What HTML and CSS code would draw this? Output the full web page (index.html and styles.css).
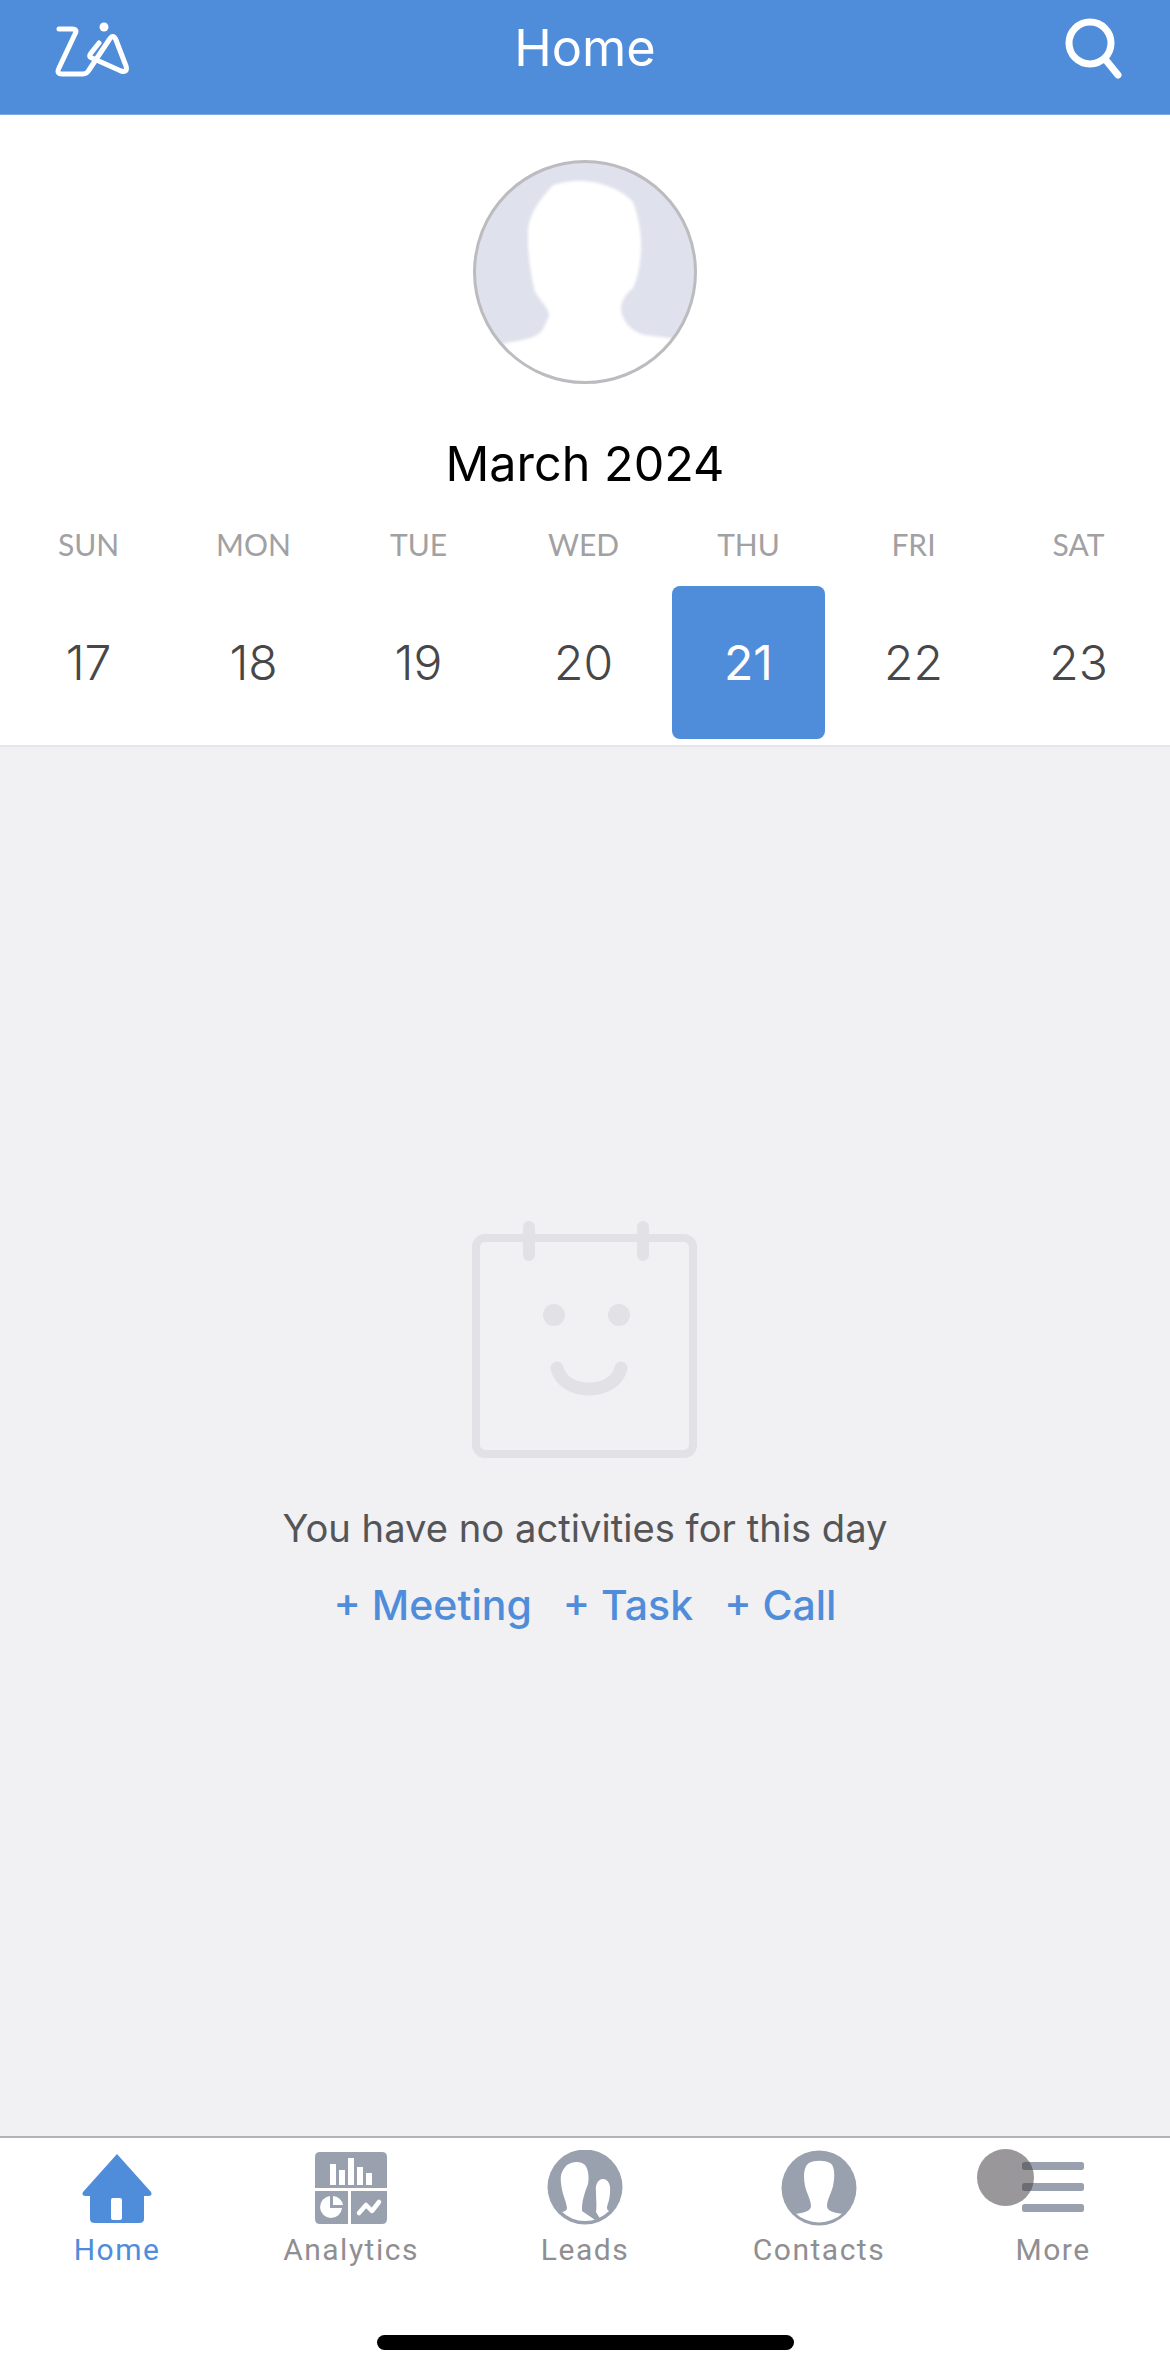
FILE: index.html
```html
<!DOCTYPE html>
<html lang="en">
<head>
    <meta charset="UTF-8">
    <meta name="viewport" content="width=device-width, initial-scale=1.0">
    <title>Home</title>
    <link rel="stylesheet" href="styles.css">
</head>
<body>
    <header class="topbar">
        <svg class="zia-logo" viewBox="0 0 76 56" fill="none" stroke="#fff" stroke-width="5" stroke-linecap="round" stroke-linejoin="round">
            <path d="M4 7H17Q23 7 20 12L4 46Q1 52 7 52H28Q32 52 34 48L54 18Q58 11 61 18L71 44Q73 51 66 49L37 36Q33 35 36 31L44 21"/>
            <circle cx="49" cy="5" r="4.500" fill="#fff" stroke="none"/>
        </svg>
        <h1 class="topbar-title">Home</h1>
        <svg class="search-icon" viewBox="0 0 62 70" fill="none" stroke="#fff" stroke-width="7" stroke-linecap="round">
            <circle cx="26" cy="26" r="21"/>
            <path d="M41 42L54 58"/>
        </svg>
    </header>

    <section class="summary">
        <svg class="avatar" viewBox="0 0 224 224">
            <clipPath id="avatar-clip"><circle cx="112" cy="112" r="110"/></clipPath>
            <circle cx="112" cy="112" r="110" fill="#dfe1ec"/>
            <g clip-path="url(#avatar-clip)">
                <path class="avatar-head" fill="#fff" d="M0 190L33 183C52 180 66 177 70 169L76 156C76 148 68 142 62 132C57 112 54 90 55 69C57 52 68 38 80 25C92 22 100 20 112 21C128 22 150 30 160 42C166 58 169 76 168 92C167 108 164 120 160 128C150 136 146 146 149 154C152 164 160 172 172 175L197 178L224 190V224H0Z"/>
            </g>
            <circle cx="112" cy="112" r="110.500" fill="none" stroke="#bcbcc0" stroke-width="3"/>
        </svg>
        <h2 class="month">March 2024</h2>
        <div class="week">
            <div class="day"><span class="day-name">SUN</span><span class="day-num">17</span></div>
            <div class="day"><span class="day-name">MON</span><span class="day-num">18</span></div>
            <div class="day"><span class="day-name">TUE</span><span class="day-num">19</span></div>
            <div class="day"><span class="day-name">WED</span><span class="day-num">20</span></div>
            <div class="day day-selected"><span class="day-name">THU</span><span class="day-num">21</span></div>
            <div class="day"><span class="day-name">FRI</span><span class="day-num">22</span></div>
            <div class="day"><span class="day-name">SAT</span><span class="day-num">23</span></div>
        </div>
    </section>

    <main class="agenda">
        <svg class="empty-icon" viewBox="0 0 226 238" fill="none" stroke="#e2e1e5" stroke-width="8" stroke-linecap="round">
            <rect x="4" y="18" width="217" height="216" rx="9"/>
            <path d="M57 7V35M171 7V35" stroke-width="12"/>
            <circle cx="82" cy="95" r="11" fill="#e2e1e5" stroke="none"/>
            <circle cx="147" cy="95" r="11" fill="#e2e1e5" stroke="none"/>
            <path d="M85 148C91 176 143 176 149 148" stroke-width="13"/>
        </svg>
        <p class="empty-text">You have no activities for this day</p>
        <div class="quick-links">
            <a class="quick-link">+ Meeting</a>
            <a class="quick-link">+ Task</a>
            <a class="quick-link">+ Call</a>
        </div>
    </main>

    <nav class="tabbar">
        <div class="tabs">
            <div class="tab tab-active">
                <svg class="tab-icon" viewBox="0 0 76 76">
                    <path fill="#4f8ddb" d="M38 4L72 42Q74 46 69 46H65V69Q65 73 60 73H16Q11 73 11 69V46H7Q2 46 4 42Z"/>
                    <rect x="32" y="48" width="11" height="22" rx="2" fill="#fff"/>
                </svg>
                <span class="tab-label">Home</span>
            </div>
            <div class="tab">
                <svg class="tab-icon" viewBox="0 0 76 76">
                    <path fill="#9aa1ae" d="M7 2H69Q74 2 74 7V38H2V7Q2 2 7 2ZM2 41H35V74H7Q2 74 2 69ZM38 41H74V69Q74 74 69 74H38Z"/>
                    <g fill="#fff">
                        <rect x="17" y="14" width="6" height="21"/>
                        <rect x="26" y="20" width="6" height="15"/>
                        <rect x="35" y="8" width="6" height="27"/>
                        <rect x="44" y="17" width="6" height="18"/>
                        <rect x="53" y="23" width="6" height="12"/>
                        <path d="M17 46V58H29A11 11 0 1 1 17 46ZM20 46A11 11 0 0 1 30 55H20Z"/>
                    </g>
                    <path d="M46 63L53 55L59 61L66 52" fill="none" stroke="#fff" stroke-width="4.500" stroke-linecap="round" stroke-linejoin="round"/>
                </svg>
                <span class="tab-label">Analytics</span>
            </div>
            <div class="tab">
                <svg class="tab-icon" viewBox="0 0 76 76">
                    <clipPath id="leads-clip"><circle cx="38" cy="37" r="34"/></clipPath>
                    <circle cx="38" cy="37" r="37.500" fill="#9aa1ae"/>
                    <g clip-path="url(#leads-clip)" fill="#fff">
                        <path d="M6 65L15 62Q20 61 20 58C19 50 15 44 14 33C13 25 15 20 20 15C26 11 34 11 38 15C42 20 42 29 41 34C38 42 35 50 35 59V61L54 74L40 80H6Z"/>
                        <path d="M49 62C50 55 49 50 49 42C48 33 52 29 56 29C60 29 64 33 63 42C63 50 60 55 60 58C60 61 64 62 68 62L72 60V80H60Z"/>
                    </g>
                </svg>
                <span class="tab-label">Leads</span>
            </div>
            <div class="tab">
                <svg class="tab-icon" viewBox="0 0 76 76">
                    <clipPath id="contact-clip"><circle cx="38" cy="38" r="34.500"/></clipPath>
                    <circle cx="38" cy="38" r="37.500" fill="#9aa1ae"/>
                    <path clip-path="url(#contact-clip)" fill="#fff" d="M4 60L14 64C23 63 30 61 30 56C30 50 26 44 24 36C22 26 23 16 28 13C33 10 44 10 49 13C54 16 54 26 52 36C50 44 46 50 46 56C46 61 53 63 62 64L72 60V80H4Z"/>
                </svg>
                <span class="tab-label">Contacts</span>
            </div>
            <div class="tab">
                <svg class="tab-icon" viewBox="0 0 76 76">
                    <g fill="#9aa1ae">
                        <rect x="7" y="12" width="62" height="8" rx="2.500"/>
                        <rect x="7" y="33" width="62" height="8" rx="2.500"/>
                        <rect x="7" y="54" width="62" height="8" rx="2.500"/>
                    </g>
                </svg>
                <span class="tab-label">More</span>
            </div>
        </div>
        <div class="home-indicator"></div>
        <div class="touch-dot"></div>
    </nav>
</body>
</html>
```

FILE: styles.css
```css
* {
    box-sizing: border-box;
}

body {
    font-family: Inter, "Liberation Sans", sans-serif;
    margin: 0;
    padding: 0;
    display: flex;
    flex-direction: column;
    height: 100vh;
    background-color: #f1f0f3;
    overflow: hidden;
}

h1, h2, p {
    margin: 0;
    font-weight: 400;
}

.topbar {
    height: 115px;
    flex: none;
    background-color: #4f8ddb;
    border-bottom: 1px solid #7ba7e2;
    display: grid;
    grid-template-columns: 1fr auto 1fr;
    align-items: start;
}

.zia-logo {
    width: 76px;
    height: 56px;
    margin: 22px 0 0 55px;
}

.topbar-title {
    color: #fff;
    font-size: 50.500px;
    line-height: 56px;
    margin-top: 20px;
}

.search-icon {
    width: 62px;
    height: 70px;
    margin: 17px 44px 0 0;
    justify-self: end;
}

.summary {
    flex: none;
    height: 632px;
    background-color: #fff;
    border-bottom: 2px solid #e6e5e9;
    display: flex;
    flex-direction: column;
    align-items: center;
    padding-top: 45px;
}

.avatar {
    width: 224px;
    height: 224px;
    display: block;
}

.avatar-head {
    filter: blur(1.5px);
}

.month {
    font-size: 48.500px;
    line-height: 58px;
    color: #000;
    margin-top: 51px;
}

.week {
    width: 100%;
    display: grid;
    grid-template-columns: repeat(7, 165px);
    padding: 0 5px 0 6px;
    margin-top: 31px;
}

.day {
    display: flex;
    flex-direction: column;
    align-items: center;
}

.day-name {
    font-family: Lato, sans-serif;
    font-size: 30px;
    line-height: 40px;
    color: #a1a1a3;
}

.day-num {
    width: 153px;
    height: 153px;
    margin-top: 22px;
    display: flex;
    align-items: center;
    justify-content: center;
    font-family: Inter, sans-serif;
    font-weight: 300;
    font-size: 48px;
    color: #47474a;
    border-radius: 8px;
}

.day-selected .day-num {
    background-color: #4f8ddb;
    color: #fff;
    font-weight: 400;
}

.agenda {
    flex: 1;
    display: flex;
    flex-direction: column;
    align-items: center;
    padding-top: 473px;
    min-height: 0;
}

.empty-icon {
    width: 226px;
    height: 238px;
    display: block;
}

.empty-text {
    font-size: 38.200px;
    line-height: 46px;
    color: #555558;
    margin-top: 47px;
}

.quick-links {
    display: flex;
    gap: 31px;
    margin-top: 29px;
}

.quick-link {
    font-size: 41px;
    line-height: 50px;
    font-weight: 500;
    color: #4f8ddb;
}

.tabbar {
    flex: none;
    height: 238px;
    background-color: #fff;
    border-top: 2px solid #b2b1b5;
    position: relative;
}

.tabs {
    display: grid;
    grid-template-columns: repeat(5, 234px);
    padding-top: 12px;
}

.tab {
    display: flex;
    flex-direction: column;
    align-items: center;
}

.tab-icon {
    width: 76px;
    height: 76px;
    display: block;
}

.tab-label {
    font-family: Roboto, sans-serif;
    font-size: 30px;
    line-height: 36px;
    letter-spacing: 1.500px;
    color: #8f8f93;
    margin-top: 6px;
}

.tab-active .tab-label {
    color: #4f8ddb;
}

.home-indicator {
    position: absolute;
    left: 377px;
    top: 197px;
    width: 417px;
    height: 15px;
    border-radius: 8px;
    background-color: #000;
}

.touch-dot {
    position: absolute;
    left: 977px;
    top: 11px;
    width: 57px;
    height: 57px;
    border-radius: 50%;
    background-color: rgba(70, 66, 70, 0.55);
}
```
